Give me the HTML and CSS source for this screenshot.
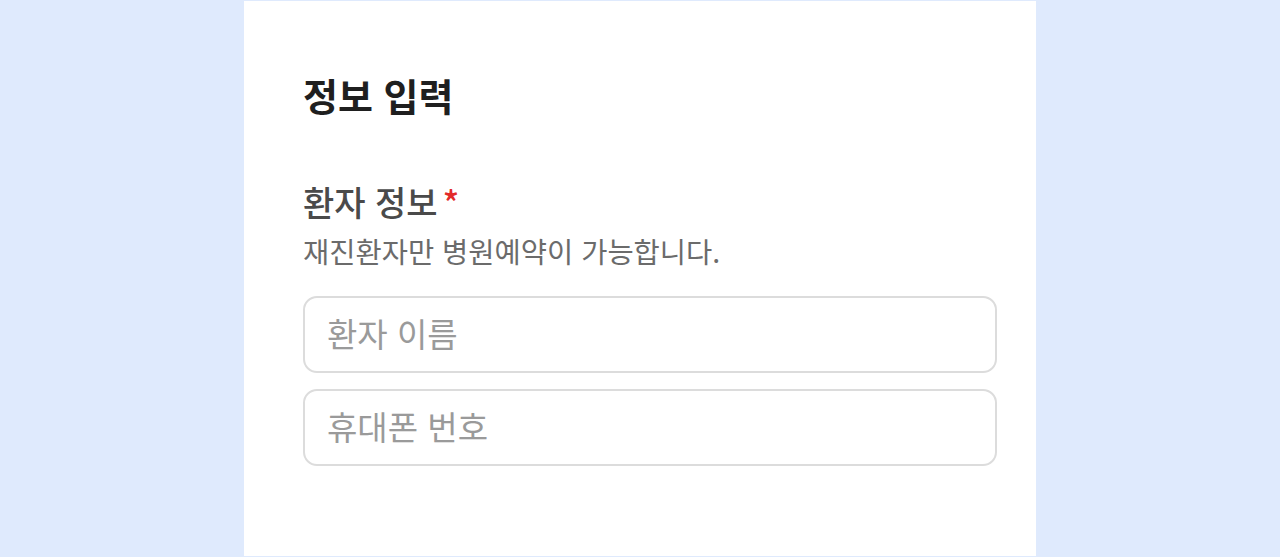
FILE: index.html
```html
<!DOCTYPE html>
<html lang="ko">
<head>
<meta charset="utf-8">
<link rel="stylesheet" href="styles.css">
</head>
<body>
<main class="panel">
  <h1 class="title">정보 입력</h1>
  <section class="section">
    <h2 class="label">환자 정보<span class="req">*</span></h2>
    <p class="desc">재진환자만 병원예약이 가능합니다.</p>
    <div class="fields">
      <input class="field" type="text" placeholder="환자 이름">
      <input class="field" type="tel" placeholder="휴대폰 번호">
    </div>
  </section>
</main>
</body>
</html>
```
FILE: styles.css
```css
html, body {
  margin: 0;
  height: 100%;
}
body {
  background: #dfeafd;
  padding: 1px 0;
  box-sizing: border-box;
  font-family: "Noto Sans CJK KR", "Noto Sans", sans-serif;
}
.panel {
  width: 792px;
  height: 555px;
  margin: 0 auto;
  background: #fff;
  box-sizing: border-box;
  padding: 64px 39px 0 59px;
}
.title {
  margin: 0;
  font-size: 38px;
  font-weight: 700;
  color: #1f1f1f;
  line-height: 60px;
}
.section {
  margin-top: 57px;
}
.label {
  margin: 0;
  font-size: 34px;
  font-weight: 500;
  color: #4a4a4a;
  line-height: 40px;
}
.req {
  color: #e32a2a;
  margin-left: 5px;
}
.desc {
  margin: 9px 0 0;
  font-size: 28.5px;
  color: #6b6b6b;
  line-height: 40px;
}
.fields {
  margin-top: 25px;
  display: flex;
  flex-direction: column;
  gap: 16px;
}
.field {
  display: block;
  width: 100%;
  height: 77px;
  box-sizing: border-box;
  border: 2px solid #dcdcdc;
  border-radius: 14px;
  padding: 0 22px 3px;
  font-family: inherit;
  font-size: 33px;
  color: #333;
  outline: none;
  background: #fff;
}
.field::placeholder {
  color: #9a9a9a;
}
```
